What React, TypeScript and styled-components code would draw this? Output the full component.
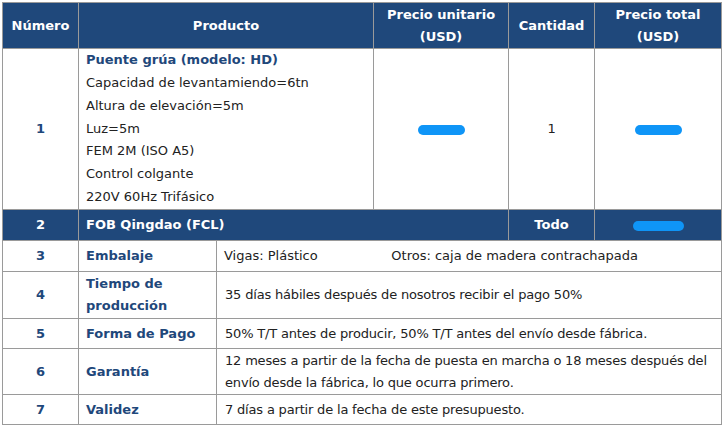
import React from "react";
import styled, { createGlobalStyle } from "styled-components";

const Global = createGlobalStyle`
    html, body {
        margin: 0;
        padding: 0;
        background: #ffffff;
    }
    body {
        font-family: "DejaVu Sans", Verdana, sans-serif;
        font-size: 13px;
        color: #222222;
    }
`;

const Page = styled.div`
    padding: 2px 2px 0 2px;
`;

const Table = styled.table`
    width: 719px;
    border-collapse: collapse;
    table-layout: fixed;
    border: 1px solid #9a9a9a;
`;

const Row = styled.tr<{ $h: number; $dark?: boolean }>`
    height: ${(p) => p.$h}px;
    background: ${(p) => (p.$dark ? "#1f487b" : "#ffffff")};
`;

const HeadCell = styled.th`
    color: #ffffff;
    font-weight: bold;
    font-size: 13px;
    line-height: 22px;
    text-align: center;
    border: 1px solid #9a9a9a;
    padding: 0 4px;
`;

const Cell = styled.td<{ $align?: string; $bold?: boolean; $blue?: boolean; $white?: boolean; $tight?: boolean }>`
    border: 1px solid #9a9a9a;
    text-align: ${(p) => p.$align || "left"};
    font-weight: ${(p) => (p.$bold ? "bold" : "normal")};
    color: ${(p) => (p.$white ? "#ffffff" : p.$blue ? "#1f487b" : "#222222")};
    line-height: 22px;
    padding: ${(p) => (p.$tight ? "0 3px 0 8px" : "0 7px")};
    letter-spacing: ${(p) => (p.$tight ? "-0.18px" : "normal")};
    vertical-align: middle;
`;

const Spec = styled.div<{ $title?: boolean }>`
    color: ${(p) => (p.$title ? "#1f487b" : "#222222")};
    font-weight: ${(p) => (p.$title ? "bold" : "normal")};
    line-height: 22.8px;
`;

const Split = styled.div`
    display: flex;
    justify-content: space-between;
    padding-right: 76px;
`;

const Redacted = styled.span<{ $w?: number }>`
    display: inline-block;
    width: ${(p) => p.$w || 47}px;
    height: 10px;
    border-radius: 5px;
    background: #0f95f7;
    vertical-align: middle;
`;

const specs = [
    "Capacidad de levantamiendo=6tn",
    "Altura de elevación=5m",
    "Luz=5m",
    "FEM 2M (ISO A5)",
    "Control colgante",
    "220V 60Hz Trifásico",
];

const terms = [
    { n: "4", label: <>Tiempo de<br />producción</>, text: "35 días hábiles después de nosotros recibir el pago 50%", h: 47 },
    { n: "5", label: "Forma de Pago", text: "50% T/T antes de producir, 50% T/T antes del envío desde fábrica.", h: 30 },
    {
        n: "6",
        label: "Garantía",
        text: "12 meses a partir de la fecha de puesta en marcha o 18 meses después del envío desde la fábrica, lo que ocurra primero.",
        h: 46,
    },
    { n: "7", label: "Validez", text: "7 días a partir de la fecha de este presupuesto.", h: 30 },
];

const App: React.FC = () => {
    return (
        <Page>
            <Global />
            <Table>
                <colgroup>
                    <col style={{ width: 76 }} />
                    <col style={{ width: 138 }} />
                    <col style={{ width: 157 }} />
                    <col style={{ width: 135 }} />
                    <col style={{ width: 86 }} />
                    <col style={{ width: 127 }} />
                </colgroup>
                <tbody>
                    <Row $h={46} $dark>
                        <HeadCell>Número</HeadCell>
                        <HeadCell colSpan={2}>Producto</HeadCell>
                        <HeadCell>Precio unitario<br />(USD)</HeadCell>
                        <HeadCell>Cantidad</HeadCell>
                        <HeadCell>Precio total<br />(USD)</HeadCell>
                    </Row>
                    <Row $h={161}>
                        <Cell $align="center" $bold $blue>1</Cell>
                        <Cell colSpan={2}>
                            <Spec $title>Puente grúa (modelo: HD)</Spec>
                            {specs.map((s) => (
                                <Spec key={s}>{s}</Spec>
                            ))}
                        </Cell>
                        <Cell $align="center"><Redacted /></Cell>
                        <Cell $align="center">1</Cell>
                        <Cell $align="center"><Redacted /></Cell>
                    </Row>
                    <Row $h={31} $dark>
                        <Cell $align="center" $bold $white>2</Cell>
                        <Cell colSpan={3} $bold $white>FOB Qingdao (FCL)</Cell>
                        <Cell $align="center" $bold $white>Todo</Cell>
                        <Cell $align="center"><Redacted $w={51} /></Cell>
                    </Row>
                    <Row $h={31}>
                        <Cell $align="center" $bold $blue>3</Cell>
                        <Cell $bold $blue>Embalaje</Cell>
                        <Cell colSpan={4}>
                            <Split>
                                <span>Vigas: Plástico</span>
                                <span>Otros: caja de madera contrachapada</span>
                            </Split>
                        </Cell>
                    </Row>
                    {terms.map((t) => (
                        <Row key={t.n} $h={t.h}>
                            <Cell $align="center" $bold $blue>{t.n}</Cell>
                            <Cell $bold $blue>{t.label}</Cell>
                            <Cell colSpan={4} $tight>{t.text}</Cell>
                        </Row>
                    ))}
                </tbody>
            </Table>
        </Page>
    );
};

export default App;
